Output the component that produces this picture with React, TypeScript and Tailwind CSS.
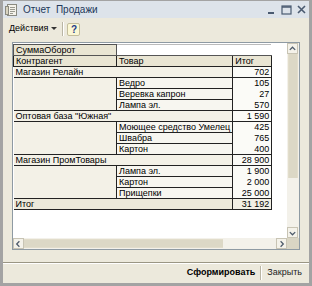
import React from "react";

type Row =
  | { kind: "group"; name: string; total: string }
  | { kind: "item"; name: string; total: string };

const rows: Row[] = [
  { kind: "group", name: "Магазин Релайн", total: "702" },
  { kind: "item", name: "Ведро", total: "105" },
  { kind: "item", name: "Веревка капрон", total: "27" },
  { kind: "item", name: "Лампа эл.", total: "570" },
  { kind: "group", name: "Оптовая база \"Южная\"", total: "1 590" },
  { kind: "item", name: "Моющее средство Умелец", total: "425" },
  { kind: "item", name: "Швабра", total: "765" },
  { kind: "item", name: "Картон", total: "400" },
  { kind: "group", name: "Магазин ПромТовары", total: "28 900" },
  { kind: "item", name: "Лампа эл.", total: "1 900" },
  { kind: "item", name: "Картон", total: "2 000" },
  { kind: "item", name: "Прищепки", total: "25 000" },
];

const cell = "h-[11px] p-0 px-[2px] leading-[10px] whitespace-nowrap overflow-hidden";

function WinIcon() {
  return (
    <svg width="14" height="14" viewBox="0 0 14 14">
      <rect x="2.5" y="1.5" width="9" height="11" fill="#f4f2ea" stroke="#8a8a80" />
      <rect x="0.5" y="3.5" width="3" height="8" fill="#d9d4c0" stroke="#8a8a80" />
      <path d="M5 4.5h5M5 6.5h5M5 8.5h5M5 10.5h3" stroke="#9a9a90" />
    </svg>
  );
}

function Arrow({ dir }: { dir: "up" | "down" | "left" | "right" }) {
  const d = {
    up: "M2 6 L5 3 L8 6",
    down: "M2 4 L5 7 L8 4",
    left: "M6 2 L3 5 L6 8",
    right: "M4 2 L7 5 L4 8",
  }[dir];
  return (
    <div className="flex h-[11px] w-[11px] items-center justify-center border border-[#c8c4b4] bg-[#f4f2ea]">
      <svg width="10" height="10" viewBox="0 0 10 10">
        <path d={d} fill="none" stroke="#4d5a6a" strokeWidth="1.4" />
      </svg>
    </div>
  );
}

export default function App() {
  return (
    <div
      className="flex h-[286px] w-[312px] flex-col bg-[#a3a3a3] px-[3px] pt-[1px] pb-[3px] text-[9px] text-black"
      style={{ fontFamily: '"Liberation Sans", Arial, sans-serif' }}
    >
      {/* Title bar */}
      <div className="flex h-[17px] items-center bg-[#dde3ea] pl-[2px] pr-[3px]">
        <WinIcon />
        <span className="ml-[4px] text-[10px] text-[#22385a]">Отчет&nbsp;&nbsp;Продажи</span>
        <div className="ml-auto flex items-center gap-[5px]">
          <svg width="9" height="9" viewBox="0 0 9 9">
            <path d="M1 8h6" stroke="#4a5a70" strokeWidth="2" />
          </svg>
          <svg width="11" height="10" viewBox="0 0 11 10">
            <rect x="1" y="1" width="9" height="8" fill="none" stroke="#4a5a70" strokeWidth="1.2" />
            <path d="M1 2h9" stroke="#4a5a70" strokeWidth="1.5" />
          </svg>
          <svg width="9" height="9" viewBox="0 0 9 9">
            <path d="M1 1L8 8M8 1L1 8" stroke="#4a5a70" strokeWidth="1.6" />
          </svg>
        </div>
      </div>

      <div className="flex flex-1 flex-col bg-[#ece9dc]">
        {/* Toolbar */}
        <div className="flex h-[22px] items-center pl-[6px]">
          <span>Действия</span>
          <svg className="ml-[3px]" width="6" height="4" viewBox="0 0 6 4">
            <path d="M0 0h6L3 3z" fill="#333" />
          </svg>
          <div className="ml-[5px] h-[14px] w-[2px] border-l border-[#b9b5a4] bg-white" />
          <div className="ml-[3px] flex h-[13px] w-[13px] items-center justify-center rounded-[2px] border border-[#c3bd9c] bg-[#fbf7d4] text-[10px] font-bold text-[#1e3d8a]">
            ?
          </div>
        </div>

        {/* Spreadsheet */}
        <div className="mx-[9px] mt-[2px] flex h-[208px] flex-col border border-[#8e9aa3] bg-white">
          <div className="flex flex-1">
            <div className="flex-1 pt-[1px]">
              <table className="table-fixed border-collapse text-[9px]">
                <colgroup>
                  <col className="w-[103px]" />
                  <col className="w-[113px]" />
                  <col className="w-[39px]" />
                </colgroup>
                <tbody>
                  <tr>
                    <td className={`${cell} border border-[#555] bg-[#e9e5d3]`}>СуммаОборот</td>
                    <td colSpan={2} className={`${cell} border border-[#555] border-r-white border-t-[#bbb] bg-white`} />
                  </tr>
                  <tr>
                    <td className={`${cell} border border-[#222] bg-[#e9e5d3]`}>Контрагент</td>
                    <td className={`${cell} border border-[#222] bg-[#e9e5d3]`}>Товар</td>
                    <td className={`${cell} border border-[#222] bg-[#e9e5d3]`}>Итог</td>
                  </tr>
                  {rows.map((r, i) =>
                    r.kind === "group" ? (
                      <tr key={i}>
                        <td colSpan={2} className={`${cell} border-t border-b border-[#222] bg-[#f3f1e7]`}>
                          {r.name}
                        </td>
                        <td className={`${cell} border border-[#222] bg-[#fbfbf7] text-right`}>{r.total}</td>
                      </tr>
                    ) : (
                      <tr key={i}>
                        <td className={`${cell} bg-[#f3f1e7]`} />
                        <td className={`${cell} border border-[#222] bg-[#f7f6f0]`}>{r.name}</td>
                        <td className={`${cell} border-x border-[#222] bg-[#fbfbf7] text-right`}>{r.total}</td>
                      </tr>
                    )
                  )}
                  <tr>
                    <td colSpan={2} className={`${cell} border-y border-[#222] bg-[#ece9da]`}>Итог</td>
                    <td className={`${cell} border border-[#222] bg-[#f1efe4] text-right`}>31 192</td>
                  </tr>
                </tbody>
              </table>
            </div>
            {/* Vertical scrollbar */}
            <div className="flex w-[12px] flex-col bg-[#f3f1ea]">
              <Arrow dir="up" />
              <div className="mx-[1px] h-[124px] border-x border-[#e2ddcb] bg-[#dcd8c6]" />
              <div className="flex-1" />
              <Arrow dir="down" />
            </div>
          </div>
          {/* Horizontal scrollbar */}
          <div className="flex h-[11px]">
            <div className="flex flex-1 bg-[#f3f1ea]">
              <Arrow dir="left" />
              <div className="my-[1px] w-[199px] border-y border-[#e2ddcb] bg-[#dcd8c6]" />
              <div className="flex-1" />
              <Arrow dir="right" />
            </div>
            <div className="w-[12px] bg-[#d9d5c4]" />
          </div>
        </div>

        {/* Bottom bar */}
        <div className="mt-auto flex h-[21px] items-center justify-end border-t border-[#9a9684] pr-[7px] shadow-[inset_0_1px_0_#fff]">
          <span className="font-bold">Сформировать</span>
          <div className="mx-[5px] h-[14px] w-[2px] border-l border-[#b9b5a4] bg-white" />
          <span className="text-[#222]">Закрыть</span>
        </div>
      </div>
    </div>
  );
}
